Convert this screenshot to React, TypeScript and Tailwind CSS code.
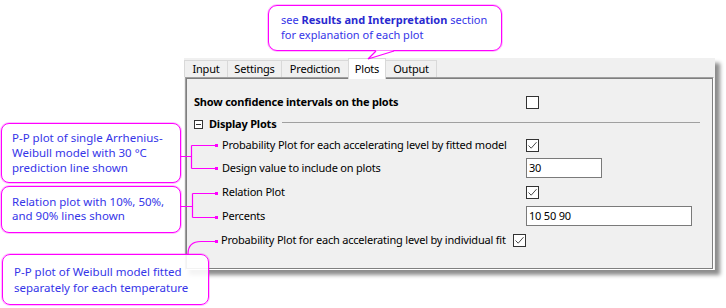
import React from "react";

function Check({ checked }: { checked?: boolean }) {
  return (
    <span className="w-[13px] h-[13px] border border-[#333333] bg-white flex items-center justify-center shrink-0">
      {checked && (
        <svg width="11" height="11" viewBox="0 0 11 11">
          <path d="M1.5 5.5 L4.2 8.2 L9.5 2.2" fill="none" stroke="#4a4a4a" strokeWidth="1" />
        </svg>
      )}
    </span>
  );
}

export default function App() {
  return (
    <div className="relative w-[726px] h-[308px] bg-white overflow-hidden font-['Noto_Sans',sans-serif] text-[11px] tracking-[-0.2px] text-black whitespace-nowrap">
      {/* Dialog */}
      <div className="ml-[184px] pt-[58px]">
        <div className="w-[531px] h-[212px] bg-[#f0f0f0] flex flex-col pl-[1px] pr-[1px] shadow-[5px_5px_4px_rgba(0,0,0,0.45)]">
          <div className="h-[19px] flex items-end -ml-[1px] leading-[16px]">
            <div className="w-[44px] h-[17px] border border-b-0 border-[#d9d9d9] flex justify-center">Input</div>
            <div className="w-[54px] h-[17px] border border-b-0 border-l-0 border-[#d9d9d9] flex justify-center">Settings</div>
            <div className="w-[67px] h-[17px] border border-b-0 border-l-0 border-[#d9d9d9] flex justify-center">Prediction</div>
            <div className="w-[38px] h-[21px] -mb-[2px] relative z-10 bg-white border border-b-0 border-[#d9d9d9] flex justify-center pt-[2px] -ml-[1px]">Plots</div>
            <div className="w-[51px] h-[17px] border border-b-0 border-l-0 border-[#d9d9d9] flex justify-center">Output</div>
          </div>
          <div className="flex-1 border border-l-[#a0a0a0] border-t-[#a0a0a0] border-r-white border-b-white flex">
            <div className="flex-1 border border-[#7f7f7f] flex flex-col pt-[12px] pl-[7px] pr-[12px]">
              <div className="h-[23px] flex items-center">
                <span className="w-[332px] font-bold">Show confidence intervals on the plots</span>
                <Check />
              </div>
              <div className="h-[20px] flex items-center">
                <span className="w-[9px] h-[9px] border border-[#333333] bg-white flex items-center justify-center mr-[6px]">
                  <span className="w-[5px] h-[1px] bg-[#333333]" />
                </span>
                <span className="font-bold">Display Plots</span>
                <span className="flex-1 h-[1px] bg-[#a0a0a0] ml-[5px] -mt-[3px]" />
              </div>
              <div className="h-[22px] flex items-center pl-[28px]">
                <span className="w-[304px]">Probability Plot for each accelerating level by fitted model</span>
                <Check checked />
              </div>
              <div className="h-[24px] flex items-center pl-[28px]">
                <span className="w-[304px]">Design value to include on plots</span>
                <div className="w-[76px] h-[20px] border border-[#7a7a7a] bg-white flex items-center pl-[2px]">30</div>
              </div>
              <div className="h-[24px] flex items-center pl-[28px]">
                <span className="w-[304px]">Relation Plot</span>
                <Check checked />
              </div>
              <div className="h-[24px] flex items-center pl-[28px]">
                <span className="w-[304px]">Percents</span>
                <div className="w-[166px] h-[20px] border border-[#7a7a7a] bg-white flex items-center pl-[2px]">10 50 90</div>
              </div>
              <div className="h-[24px] flex items-center pl-[27px] gap-[7px]">
                <span>Probability Plot for each accelerating level by individual fit</span>
                <Check checked />
              </div>
            </div>
          </div>
        </div>
      </div>

      {/* Top callout */}
      <div className="absolute left-[268px] top-[5px] w-[234px] h-[46px] bg-white border border-[#ff00ff] rounded-[9px] shadow-[0_0_0_1px_rgba(255,0,255,0.25)] z-20 pl-[12px] pt-[6px] leading-[15px] text-[11px] tracking-normal text-[#3535e8]">
        <div>
          see <span className="font-bold text-[#2a2ad0]">Results and Interpretation</span> section
        </div>
        <div>for explanation of each plot</div>
      </div>

      {/* Left callouts */}
      <div className="absolute left-[1px] top-[123px] w-[180px] h-[60px] bg-white border border-[#ff00ff] rounded-[8px] shadow-[0_0_0_1px_rgba(255,0,255,0.25)] z-20 pl-[10px] pt-[6px] leading-[15px] text-[11.5px] tracking-normal text-[#3535e8]">
        P-P plot of single Arrhenius-
        <br />
        Weibull model with 30 °C
        <br />
        prediction line shown
      </div>
      <div className="absolute left-[1px] top-[186px] w-[180px] h-[47px] bg-white border border-[#ff00ff] rounded-[8px] shadow-[0_0_0_1px_rgba(255,0,255,0.25)] z-20 pl-[10px] pt-[8px] leading-[14px] text-[11.5px] tracking-normal text-[#3535e8]">
        Relation plot with 10%, 50%,
        <br />
        and 90% lines shown
      </div>
      <div className="absolute left-[2px] top-[254px] w-[207px] h-[51px] bg-white/90 border border-[#ff00ff] rounded-[8px] shadow-[0_0_0_1px_rgba(255,0,255,0.25)] z-20 pl-[11px] pt-[9px] leading-[16px] text-[11.5px] tracking-normal text-[#3535e8]">
        P-P plot of Weibull model fitted
        <br />
        separately for each temperature
      </div>

      {/* Connectors */}
      <svg className="absolute left-0 top-0 z-30 pointer-events-none" width="726" height="308" viewBox="0 0 726 308">
        <g stroke="#ff00ff" strokeWidth="1.2" fill="none">
          <path d="M376 50.5 L368 59 L394 50.5" fill="white" stroke="none" />
          <path d="M376 51 L368 59 L394 51" />
          <path d="M181 156.5 H191.5 M191.5 145.5 V168.5 M191.5 145.5 H216 M191.5 168.5 H216" />
          <path d="M181 206.5 H192.5 M192.5 193.5 V217.5 M192.5 193.5 H216 M192.5 217.5 H216" />
          <path d="M188 254 Q188 241.5 201 241.5 H216" />
        </g>
        <g fill="#ff00ff">
          <rect x="215" y="144" width="3" height="3" />
          <rect x="215" y="167" width="3" height="3" />
          <rect x="215" y="192" width="3" height="3" />
          <rect x="215" y="216" width="3" height="3" />
          <rect x="215" y="240" width="3" height="3" />
        </g>
      </svg>
    </div>
  );
}
